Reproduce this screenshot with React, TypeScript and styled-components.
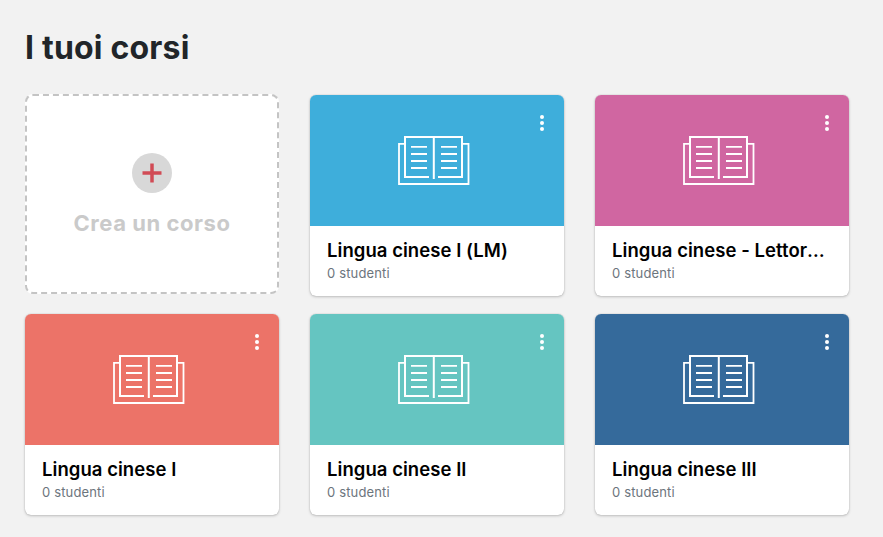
import * as React from 'react';
import styled, { createGlobalStyle } from 'styled-components';

interface Course {
  title: string;
  color: string;
}

const courses: Array<Course> = [
  { title: 'Lingua cinese I (LM)', color: '#3eaedb' },
  { title: 'Lingua cinese - Lettorato', color: '#d066a1' },
  { title: 'Lingua cinese I', color: '#ec7368' },
  { title: 'Lingua cinese II', color: '#65c5c1' },
  { title: 'Lingua cinese III', color: '#356a9b' },
];

const BookIcon = () => (
  <BookSvg viewBox="0 0 72 49" fill="none" stroke="#fff">
    <path d="M7 7.800H1V48H70.500V7.800H64" strokeWidth="1.8" />
    <path d="M31 41H7V1H64V41H40" strokeWidth="2" />
    <path d="M35.800 2V43" strokeWidth="2" />
    <path
      d="M13 10.800H29M13 18H29M13 25H29M13 32H29M43 10.800H59M43 18H59M43 25H59M43 32H59"
      strokeWidth="1.8"
    />
  </BookSvg>
);

export default function App() {
  return (
    <>
      <GlobalStyle />
      <Page>
        <Title>I tuoi corsi</Title>
        <Grid>
          <CreateCard>
            <PlusCircle>
              <svg width="20" height="20" viewBox="0 0 20 20">
                <path d="M0.500 10H19.500M10 0.500V19.500" stroke="#d14b55" strokeWidth="3.500" />
              </svg>
            </PlusCircle>
            <CreateLabel>Crea un corso</CreateLabel>
          </CreateCard>
          {courses.map((course) => (
            <Card key={course.title}>
              <CardHead color={course.color}>
                <BookIcon />
                <Menu>
                  <Dot />
                  <Dot />
                  <Dot />
                </Menu>
              </CardHead>
              <CardBody>
                <CardTitle>{course.title}</CardTitle>
                <CardMeta>0 studenti</CardMeta>
              </CardBody>
            </Card>
          ))}
        </Grid>
      </Page>
    </>
  );
}

const GlobalStyle = createGlobalStyle`
  html, body {
    margin: 0;
    padding: 0;
    background: #f2f2f2;
  }
  body {
    font-family: 'Inter', 'Noto Sans', sans-serif;
  }
`;

const Page = styled.div`
  padding: 25px 34px 21px 25px;
`;

const Title = styled.h1`
  margin: 0 0 24px;
  font-size: 32px;
  font-weight: 700;
  line-height: 45px;
  letter-spacing: 0.2px;
  color: #212529;
`;

const Grid = styled.div`
  display: grid;
  grid-template-columns: repeat(3, 254px);
  column-gap: 31px;
  row-gap: 17px;
`;

const CreateCard = styled.div`
  box-sizing: border-box;
  height: 200px;
  background: #fff;
  border: 2px dashed #c4c4c4;
  border-radius: 8px;
  display: flex;
  flex-direction: column;
  align-items: center;
  padding-top: 57px;
`;

const PlusCircle = styled.div`
  width: 40px;
  height: 40px;
  border-radius: 50%;
  background: #d8d8d8;
  display: flex;
  align-items: center;
  justify-content: center;
`;

const CreateLabel = styled.div`
  margin-top: 15px;
  font-size: 22px;
  font-weight: 700;
  line-height: 30px;
  letter-spacing: 0.55px;
  color: #cacaca;
`;

const Card = styled.div`
  margin-top: 1px;
  height: 201px;
  background: #fff;
  border-radius: 6px;
  overflow: hidden;
  box-shadow: 0 0 1px rgba(0, 0, 0, 0.3), 0 1px 3px rgba(0, 0, 0, 0.2);
`;

const CardHead = styled.div<{ color: string }>`
  position: relative;
  height: 131px;
  background: ${(p) => p.color};
  display: flex;
  align-items: center;
  justify-content: center;
`;

const BookSvg = styled.svg`
  width: 72px;
  height: 49px;
  margin-right: 7px;
`;

const Menu = styled.div`
  position: absolute;
  top: 20px;
  right: 20px;
  display: flex;
  flex-direction: column;
  gap: 2px;
`;

const Dot = styled.span`
  width: 4px;
  height: 4px;
  border-radius: 50%;
  background: #fff;
`;

const CardBody = styled.div`
  padding: 11px 20px 0 17px;
`;

const CardTitle = styled.div`
  font-size: 18.500px;
  font-weight: 600;
  line-height: 26px;
  letter-spacing: 0.05px;
  color: #000;
  white-space: nowrap;
  overflow: hidden;
  text-overflow: ellipsis;
`;

const CardMeta = styled.div`
  font-size: 13px;
  line-height: 20px;
  letter-spacing: 0.15px;
  color: #6c757d;
`;
